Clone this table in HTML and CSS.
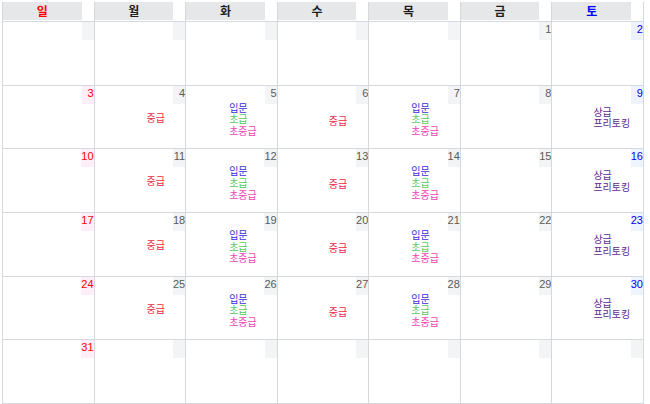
FILE: index.html
```html
<!DOCTYPE html>
<html lang="ko">
<head>
<meta charset="utf-8">
<title>달력</title>
<link rel="stylesheet" href="styles.css">
</head>
<body>
<div class="cal">
  <div class="hd"><span class="hd-label sun">일</span><span class="hd-gap"></span></div>
  <div class="hd"><span class="hd-label">월</span><span class="hd-gap"></span></div>
  <div class="hd"><span class="hd-label">화</span><span class="hd-gap"></span></div>
  <div class="hd"><span class="hd-label">수</span><span class="hd-gap"></span></div>
  <div class="hd"><span class="hd-label">목</span><span class="hd-gap"></span></div>
  <div class="hd"><span class="hd-label">금</span><span class="hd-gap"></span></div>
  <div class="hd"><span class="hd-label sat">토</span><span class="hd-gap"></span></div>

  <div class="cell"><div class="top"><span class="num"></span></div></div>
  <div class="cell"><div class="top"><span class="num"></span></div></div>
  <div class="cell"><div class="top"><span class="num"></span></div></div>
  <div class="cell"><div class="top"><span class="num"></span></div></div>
  <div class="cell"><div class="top"><span class="num"></span></div></div>
  <div class="cell"><div class="top"><span class="num">1</span></div></div>
  <div class="cell"><div class="top"><span class="num sat">2</span></div></div>

  <div class="cell"><div class="top"><span class="num sun">3</span></div></div>
  <div class="cell"><div class="top"><span class="num">4</span></div><div class="ev ev-mon"><span class="c-mid">중급</span></div></div>
  <div class="cell"><div class="top"><span class="num">5</span></div><div class="ev ev-tue"><span class="c-intro">입문</span><span class="c-basic">초급</span><span class="c-pre">초중급</span></div></div>
  <div class="cell"><div class="top"><span class="num">6</span></div><div class="ev ev-wed"><span class="c-mid">중급</span></div></div>
  <div class="cell"><div class="top"><span class="num">7</span></div><div class="ev ev-thu"><span class="c-intro">입문</span><span class="c-basic">초급</span><span class="c-pre">초중급</span></div></div>
  <div class="cell"><div class="top"><span class="num">8</span></div></div>
  <div class="cell"><div class="top"><span class="num sat">9</span></div><div class="ev ev-sat"><span class="c-adv">상급</span><span class="c-adv">프리토킹</span></div></div>

  <div class="cell"><div class="top"><span class="num sun">10</span></div></div>
  <div class="cell"><div class="top"><span class="num">11</span></div><div class="ev ev-mon"><span class="c-mid">중급</span></div></div>
  <div class="cell"><div class="top"><span class="num">12</span></div><div class="ev ev-tue"><span class="c-intro">입문</span><span class="c-basic">초급</span><span class="c-pre">초중급</span></div></div>
  <div class="cell"><div class="top"><span class="num">13</span></div><div class="ev ev-wed"><span class="c-mid">중급</span></div></div>
  <div class="cell"><div class="top"><span class="num">14</span></div><div class="ev ev-thu"><span class="c-intro">입문</span><span class="c-basic">초급</span><span class="c-pre">초중급</span></div></div>
  <div class="cell"><div class="top"><span class="num">15</span></div></div>
  <div class="cell"><div class="top"><span class="num sat">16</span></div><div class="ev ev-sat"><span class="c-adv">상급</span><span class="c-adv">프리토킹</span></div></div>

  <div class="cell"><div class="top"><span class="num sun">17</span></div></div>
  <div class="cell"><div class="top"><span class="num">18</span></div><div class="ev ev-mon"><span class="c-mid">중급</span></div></div>
  <div class="cell"><div class="top"><span class="num">19</span></div><div class="ev ev-tue"><span class="c-intro">입문</span><span class="c-basic">초급</span><span class="c-pre">초중급</span></div></div>
  <div class="cell"><div class="top"><span class="num">20</span></div><div class="ev ev-wed"><span class="c-mid">중급</span></div></div>
  <div class="cell"><div class="top"><span class="num">21</span></div><div class="ev ev-thu"><span class="c-intro">입문</span><span class="c-basic">초급</span><span class="c-pre">초중급</span></div></div>
  <div class="cell"><div class="top"><span class="num">22</span></div></div>
  <div class="cell"><div class="top"><span class="num sat">23</span></div><div class="ev ev-sat"><span class="c-adv">상급</span><span class="c-adv">프리토킹</span></div></div>

  <div class="cell"><div class="top"><span class="num sun">24</span></div></div>
  <div class="cell"><div class="top"><span class="num">25</span></div><div class="ev ev-mon"><span class="c-mid">중급</span></div></div>
  <div class="cell"><div class="top"><span class="num">26</span></div><div class="ev ev-tue"><span class="c-intro">입문</span><span class="c-basic">초급</span><span class="c-pre">초중급</span></div></div>
  <div class="cell"><div class="top"><span class="num">27</span></div><div class="ev ev-wed"><span class="c-mid">중급</span></div></div>
  <div class="cell"><div class="top"><span class="num">28</span></div><div class="ev ev-thu"><span class="c-intro">입문</span><span class="c-basic">초급</span><span class="c-pre">초중급</span></div></div>
  <div class="cell"><div class="top"><span class="num">29</span></div></div>
  <div class="cell"><div class="top"><span class="num sat">30</span></div><div class="ev ev-sat"><span class="c-adv">상급</span><span class="c-adv">프리토킹</span></div></div>

  <div class="cell"><div class="top"><span class="num sun">31</span></div></div>
  <div class="cell"><div class="top"><span class="num"></span></div></div>
  <div class="cell"><div class="top"><span class="num"></span></div></div>
  <div class="cell"><div class="top"><span class="num"></span></div></div>
  <div class="cell"><div class="top"><span class="num"></span></div></div>
  <div class="cell"><div class="top"><span class="num"></span></div></div>
  <div class="cell"><div class="top"><span class="num"></span></div></div>
</div>
</body>
</html>
```

FILE: styles.css
```css
html, body {
  margin: 0;
  padding: 0;
  background: #ffffff;
}

body {
  font-family: "Noto Sans CJK KR", "Noto Sans", sans-serif;
}

.cal {
  box-sizing: border-box;
  margin: 2px 0 0 2px;
  width: 642px;
  height: 402px;
  display: grid;
  grid-template-columns: repeat(7, 1fr);
  grid-template-rows: 19px repeat(6, 1fr);
  gap: 1px;
  background: #d5d8dc;
  border: 1px solid #d5d8dc;
  border-top: 0;
}

.hd {
  background: #ffffff;
  display: flex;
  padding-bottom: 1px;
}

.hd-label {
  flex: 1;
  background: #e6e7e9;
  color: #1e1e1e;
  font-size: 12px;
  font-weight: bold;
  line-height: 18px;
  text-align: center;
}

.hd-label.sun { color: #ff0000; }
.hd-label.sat { color: #0000ff; }

.hd-gap {
  width: 12px;
  flex: none;
}

.cell {
  background: #ffffff;
  display: flex;
  flex-direction: column;
  min-width: 0;
  overflow: hidden;
}

.top {
  display: flex;
  justify-content: flex-end;
  height: 18px;
  flex: none;
}

.num {
  min-width: 12px;
  height: 18px;
  background: #f2f4f5;
  color: #5a5a5a;
  font-family: "Liberation Sans", Arial, sans-serif;
  font-size: 11px;
  line-height: 15px;
  text-align: right;
}

.num.sun {
  background: #fdeefa;
  color: #ff0000;
}

.num.sat {
  background: #eef4fd;
  color: #0000ff;
}

.ev {
  display: flex;
  flex-direction: column;
  align-items: flex-start;
  font-size: 10px;
  line-height: 11.7px;
  white-space: nowrap;
}

.ev-mon { padding: 8px 0 0 52px; }
.ev-tue { margin-top: -2px; padding-left: 43px; }
.ev-wed { padding: 11px 0 0 51px; }
.ev-thu { margin-top: -2px; padding-left: 42px; }
.ev-sat { padding: 2px 0 0 41px; }

.c-intro { color: #3a2fd6; }
.c-basic { color: #5ec85e; }
.c-pre { color: #ee44b4; }
.c-mid { color: #ee2a46; }
.c-adv { color: #5f2a92; }
```
